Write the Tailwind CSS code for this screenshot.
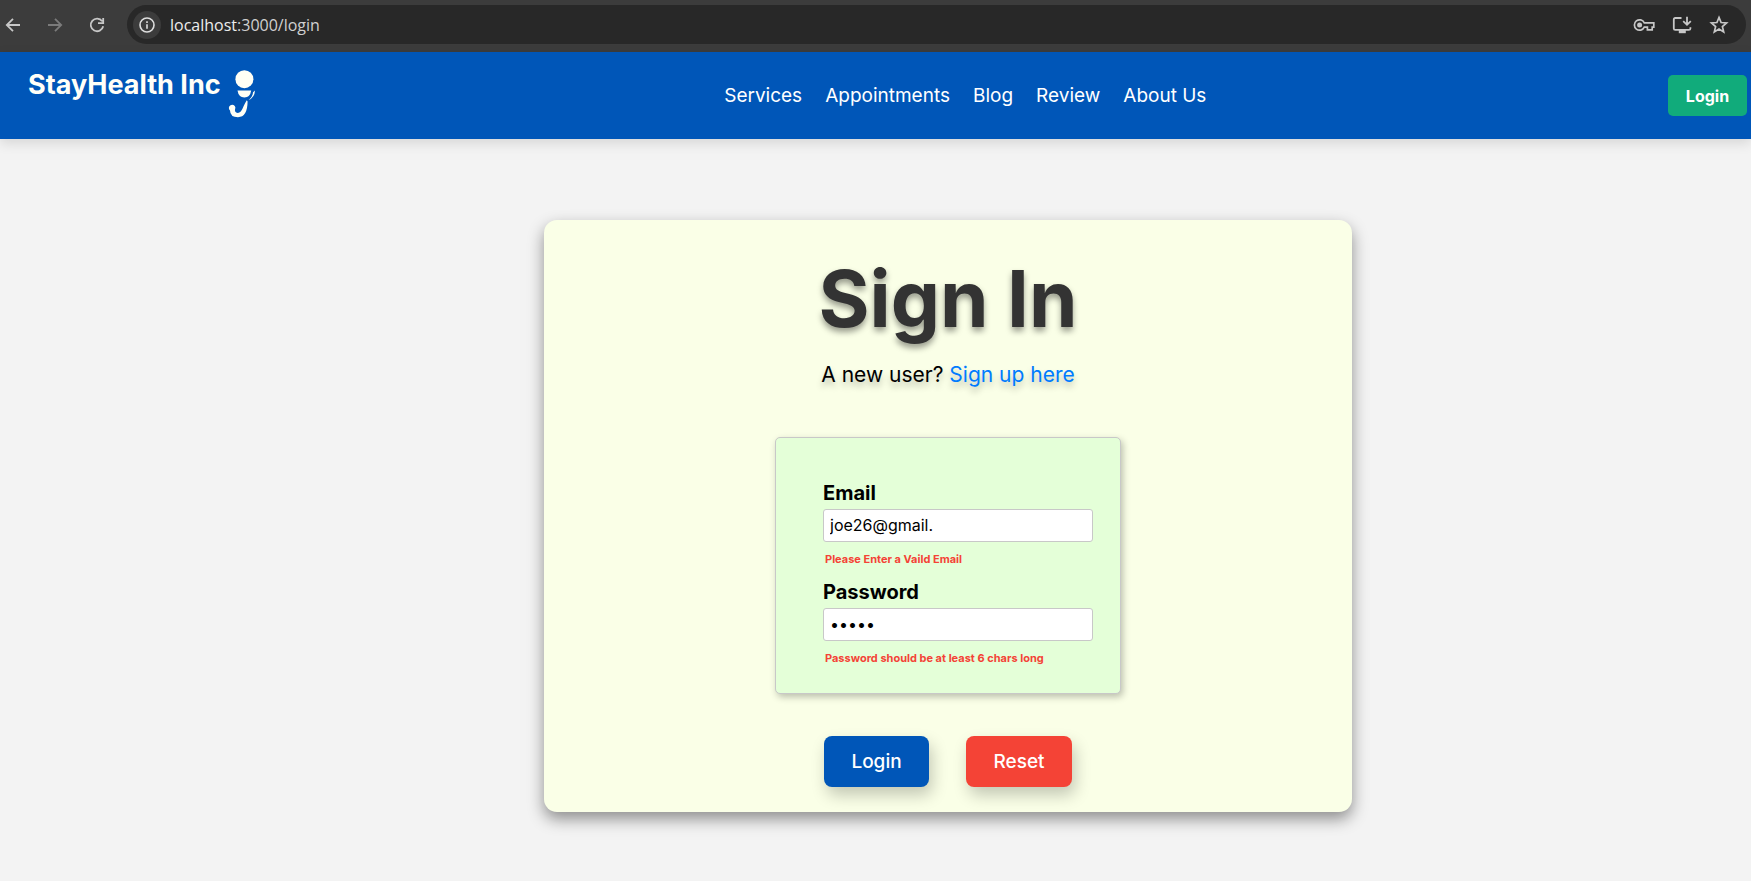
<!DOCTYPE html>
<html lang="en">
<head>
<meta charset="utf-8">
<meta name="viewport" content="width=device-width, initial-scale=1">
<title>StayHealth Inc - Sign In</title>
<script src="https://cdn.jsdelivr.net/npm/@tailwindcss/browser@4"></script>
</head>
<body class="flex min-h-screen flex-col bg-[#f3f3f3] font-['Inter',sans-serif] text-black">

<!-- Browser toolbar -->
<div class="flex h-[52px] shrink-0 items-center bg-[#3c3c3c] pr-[5px] pb-[3px]">
  <button type="button" aria-label="Back" class="ml-1 size-[18px] text-[#c7c7c7]">
    <svg viewBox="0 0 18 18" class="size-[18px]" fill="none" stroke="currentColor" stroke-width="1.8"><path d="M16 9H3M9 2.8L2.8 9 9 15.2"/></svg>
  </button>
  <button type="button" aria-label="Forward" class="ml-6 size-[18px] text-[#7b7b7b]">
    <svg viewBox="0 0 18 18" class="size-[18px]" fill="none" stroke="currentColor" stroke-width="1.8"><path d="M2 9H15M9 2.8L15.2 9 9 15.2"/></svg>
  </button>
  <button type="button" aria-label="Reload" class="ml-6 size-[18px] text-[#c7c7c7]">
    <svg viewBox="0 0 18 18" class="size-[18px]" fill="none" stroke="currentColor" stroke-width="1.8"><path d="M14.2 5.3A6.3 6.3 0 1 0 15.2 10.3M15.2 2V7.2H10"/></svg>
  </button>
  <div class="ml-[21px] flex h-[39px] flex-1 items-center rounded-full bg-[#282828] pr-[17px] pl-[6px]">
    <button type="button" aria-label="Site information" class="flex size-7 items-center justify-center rounded-full bg-[#3c3c3c] text-[#dedede]">
      <svg viewBox="0 0 16 16" class="size-4" fill="none" stroke="currentColor" stroke-width="1.6"><circle cx="8" cy="8" r="7"/><path d="M8 7.2V11.7M8 4.2V6"/></svg>
    </button>
    <span class="ml-[9px] flex-1 pt-px font-['Open_Sans',sans-serif] text-base text-[#d0d0d0]"><span class="text-[#ededed]">localhost</span>:3000/login</span>
    <div class="flex items-center gap-[17px] text-[#c7c7c7]">
      <button type="button" aria-label="Passwords"><svg viewBox="0 0 22 20" class="h-5 w-[22px]" fill="none" stroke="currentColor" stroke-width="1.7"><path d="M11.3 7.8A5.2 5.2 0 1 0 11.3 12.2H14.4V14.9H19.2V12.2H20.8V7.8Z"/><circle cx="6.6" cy="10" r="2.5" fill="currentColor" stroke="none"/></svg></button>
      <button type="button" aria-label="Install app"><svg viewBox="0 0 20 20" class="size-5" fill="none" stroke="currentColor" stroke-width="1.8"><path d="M9.5 3H3.2Q1.8 3 1.8 4.4V13.4Q1.8 14.8 3.2 14.8H16.8Q18.4 14.8 18.4 13.4V12.2M15 1.8V9.4M11.2 6.2L15 9.8 18.8 6.2"/><path d="M6.8 15H13.8V18.2H6.8Z" fill="currentColor" stroke="none"/></svg></button>
      <button type="button" aria-label="Bookmark this page"><svg viewBox="0 0 20 20" class="size-5" fill="none" stroke="currentColor" stroke-width="1.7"><path d="M10 2.4L12.1 7.5 17.6 8 13.4 11.6 14.7 17 10 14.1 5.3 17 6.6 11.6 2.4 8 7.9 7.5Z"/></svg></button>
    </div>
  </div>
</div>

<!-- Site header -->
<header class="flex h-[87px] shrink-0 items-center justify-between bg-[#0056b8] pr-1 pl-7 shadow-[0_4px_12px_rgba(0,0,0,0.12)]">
  <a href="#" class="flex items-start pr-2 pb-1 text-[27px] leading-[30px] font-bold text-[#fffff8]">
    <span>StayHealth Inc</span>
    <svg viewBox="0 0 30 48" class="ml-1 h-12 w-[30px]" fill="#fffff5" aria-hidden="true">
      <circle cx="19.4" cy="9.2" r="9"/>
      <path d="M12.5 20.5H26.2Q25.2 27.4 19.4 27.4 13.6 27.4 12.5 20.5Z"/>
      <path d="M30 20.5Q29.6 27.6 23.6 30Q28 26.4 28 22.2Z"/>
      <path d="M21.8 30.2L22.6 31.6Q22.4 47.2 13 47.2 5.2 47.2 5 40.5A3.3 3.3 0 1 1 10.4 37.4Q8.8 42.8 12.8 42.9C17 43 18.4 35 21.8 30.2Z"/>
    </svg>
  </a>
  <nav class="flex gap-[23px] pt-0.5 text-[19px] text-white">
    <a href="#">Services</a>
    <a href="#">Appointments</a>
    <a href="#">Blog</a>
    <a href="#">Review</a>
    <a href="#">About Us</a>
  </nav>
  <button type="button" class="h-[41px] w-[79px] rounded-[5px] bg-[#11ab7b] text-base font-bold text-white">Login</button>
</header>

<!-- Sign-in card -->
<main class="flex flex-1 items-start justify-center pt-[81px] pl-[145px]">
  <section class="flex w-full max-w-[808px] flex-col items-center rounded-[13px] bg-[#faffe7] pt-[31px] pb-[25px] shadow-[0_7px_16px_rgba(0,0,0,0.42)]">
    <h1 class="text-[78px] leading-[96px] font-bold text-[#333] [text-shadow:0_4px_6px_rgba(0,0,0,0.4)]">Sign In</h1>
    <p class="mt-[14px] text-[21px] leading-7 [text-shadow:0_5px_6px_rgba(0,0,0,0.25)]">A new user? <a href="#" class="text-[#007bff]">Sign up here</a></p>
    <form class="flex flex-col items-center" novalidate>
      <div class="mt-12 w-[346px] rounded-[5px] border border-[#c8c8c8] bg-[#e4ffd8] pt-[43px] pr-[27px] pb-[27px] pl-[47px] shadow-[2px_3px_7px_rgba(0,0,0,0.25)]">
        <label for="email" class="block text-xl leading-6 font-bold">Email</label>
        <input id="email" type="email" value="joe26@gmail." class="mt-1 block h-[33px] w-full rounded-[3px] border border-[#c8c8c8] bg-white px-[6px] pb-0.5 text-base">
        <p class="mt-[9px] ml-[2px] text-[11px] leading-4 font-bold text-[#f44336]">Please Enter a Vaild Email</p>
        <label for="password" class="mt-[13px] block text-xl leading-6 font-bold">Password</label>
        <input id="password" type="password" value="12345" class="mt-1 block h-[33px] w-full rounded-[3px] border border-[#c8c8c8] bg-white px-[6px] pb-0.5 text-base">
        <p class="mt-[9px] ml-[2px] text-[11px] leading-4 font-bold text-[#f44336]">Password should be at least 6 chars long</p>
      </div>
      <div class="mt-[42px] flex gap-[37px] text-[19px] font-medium text-white">
        <button type="button" class="h-[51px] w-[105px] rounded-lg bg-[#0056b8] pt-0.5 shadow-[3px_8px_16px_rgba(0,0,0,0.22)]">Login</button>
        <button type="reset" class="h-[51px] w-[106px] rounded-lg bg-[#f44336] pt-0.5 shadow-[3px_8px_16px_rgba(0,0,0,0.22)]">Reset</button>
      </div>
    </form>
  </section>
</main>
</body>
</html>
